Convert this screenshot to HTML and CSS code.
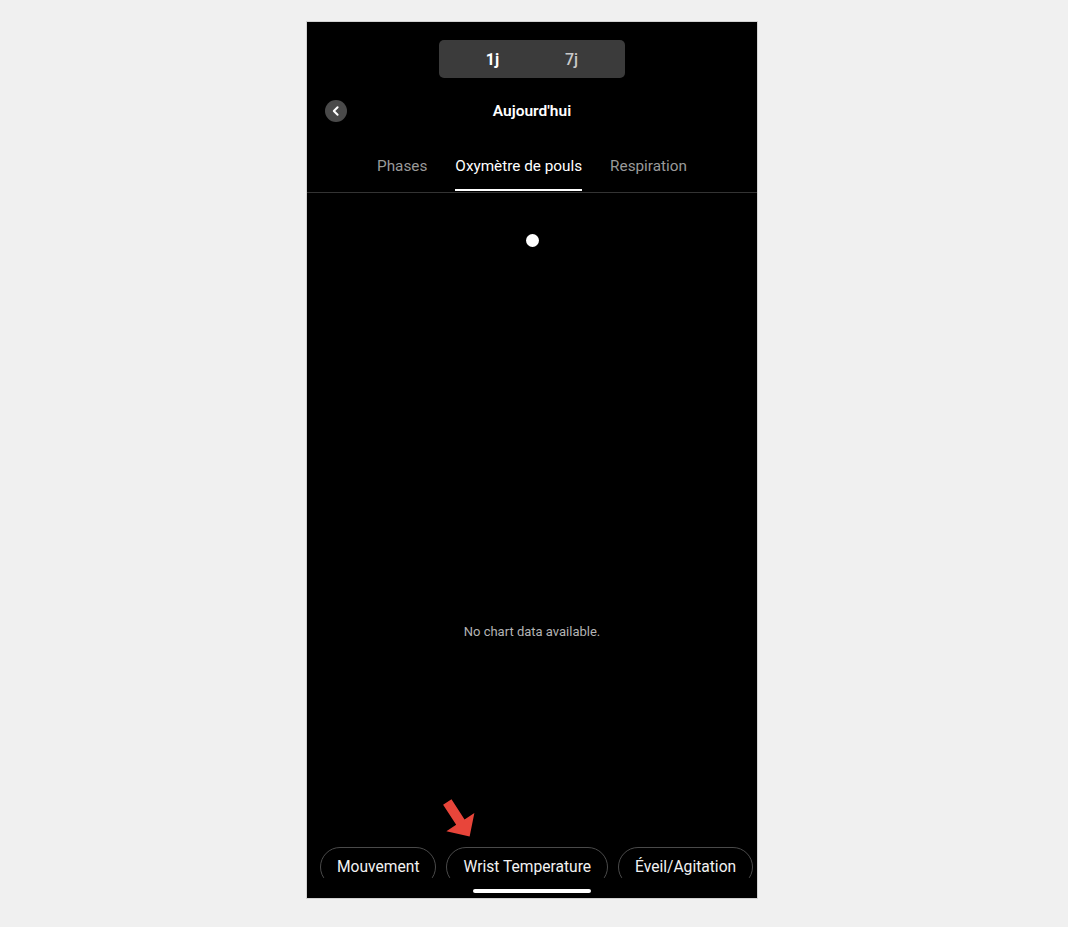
FILE: index.html
```html
<!DOCTYPE html>
<html lang="fr">
<head>
<meta charset="utf-8">
<title>Aujourd'hui</title>
<link rel="stylesheet" href="styles.css">
</head>
<body>
<div class="stage">
  <div class="phone">
    <div class="segmented">
      <span class="seg seg-active">1j</span>
      <span class="seg">7j</span>
    </div>
    <div class="header">
      <div class="back">
        <svg width="22" height="22" viewBox="0 0 22 22"><path d="M12.6 7.2 L8.8 11 L12.6 14.8" fill="none" stroke="#fff" stroke-width="2" stroke-linecap="round" stroke-linejoin="round"/></svg>
      </div>
      <div class="title">Aujourd'hui</div>
      <div></div>
    </div>
    <div class="tabs">
      <div class="tab">Phases</div>
      <div class="tab tab-active">Oxymètre de pouls</div>
      <div class="tab">Respiration</div>
    </div>
    <div class="content">
      <div class="dot"></div>
      <div class="empty">No chart data available.</div>
    </div>
    <div class="pills">
      <div class="pill">Mouvement</div>
      <div class="pill">Wrist Temperature</div>
      <div class="pill">Éveil/Agitation</div>
    </div>
    <div class="home"></div>
    <svg class="arrow" width="60" height="60" viewBox="0 0 60 60">
      <g transform="translate(17.3 12) rotate(57)">
        <polygon points="0,-5 24,-5 24,-16.7 41,0 24,16.7 24,5 0,5" fill="#e8453a"/>
      </g>
    </svg>
  </div>
</div>
</body>
</html>
```

FILE: styles.css
```css
* { box-sizing: border-box; }
html, body {
  margin: 0;
  padding: 0;
  background: #f0f0f0;
  font-family: Roboto, "Noto Sans", "Liberation Sans", sans-serif;
}
.stage {
  width: 1068px;
  height: 927px;
  padding: 22px 0 0 307px;
}
.phone {
  position: relative;
  width: 450px;
  height: 876px;
  background: #000;
  box-shadow: 0 0 0 1px #d2d2d2;
  display: flex;
  flex-direction: column;
  padding-top: 18px;
  color: #fff;
}
.segmented {
  align-self: center;
  width: 186px;
  height: 38px;
  background: #3b3b3b;
  border-radius: 5px;
  display: flex;
  justify-content: center;
  align-items: center;
}
.seg {
  width: 79px;
  text-align: center;
  font-size: 16px;
  font-weight: 500;
  color: #c9c9c9;
}
.seg-active {
  color: #fff;
  font-weight: 700;
}
.header {
  margin-top: 14px;
  height: 38px;
  display: grid;
  grid-template-columns: 1fr auto 1fr;
  align-items: center;
  padding: 0 18px;
}
.back {
  width: 22px;
  height: 22px;
  border-radius: 50%;
  background: #4a4a4a;
  display: flex;
}
.title {
  font-size: 15.5px;
  font-weight: 600;
  color: #fff;
}
.tabs {
  display: flex;
  justify-content: center;
  gap: 28px;
  padding-bottom: 1px;
  border-bottom: 1px solid #333;
}
.tab {
  padding-top: 26px;
  padding-bottom: 13px;
  line-height: 20px;
  font-size: 15.3px;
  color: #9a9a9a;
  border-bottom: 2px solid transparent;
}
.tab-active {
  color: #fff;
  border-bottom-color: #fff;
}
.content {
  flex: 1;
  display: flex;
  flex-direction: column;
  align-items: center;
}
.dot {
  margin-top: 41px;
  width: 13px;
  height: 13px;
  border-radius: 50%;
  background: #fff;
}
.empty {
  margin-top: 377px;
  font-size: 13px;
  line-height: 16px;
  color: #b4b4b4;
}
.pills {
  height: 31px;
  overflow: hidden;
  display: flex;
  gap: 10px;
  padding-left: 13px;
}
.pill {
  flex: none;
  height: 40px;
  padding: 0 16px;
  border: 1px solid #4a4a4a;
  border-radius: 20px;
  display: flex;
  align-items: center;
  font-size: 15.6px;
  color: #f2f2f2;
}
.home {
  align-self: center;
  margin-top: 11px;
  margin-bottom: 5px;
  width: 118px;
  height: 4px;
  border-radius: 2px;
  background: #fff;
}
.arrow {
  position: absolute;
  left: 123px;
  top: 768px;
}
```
